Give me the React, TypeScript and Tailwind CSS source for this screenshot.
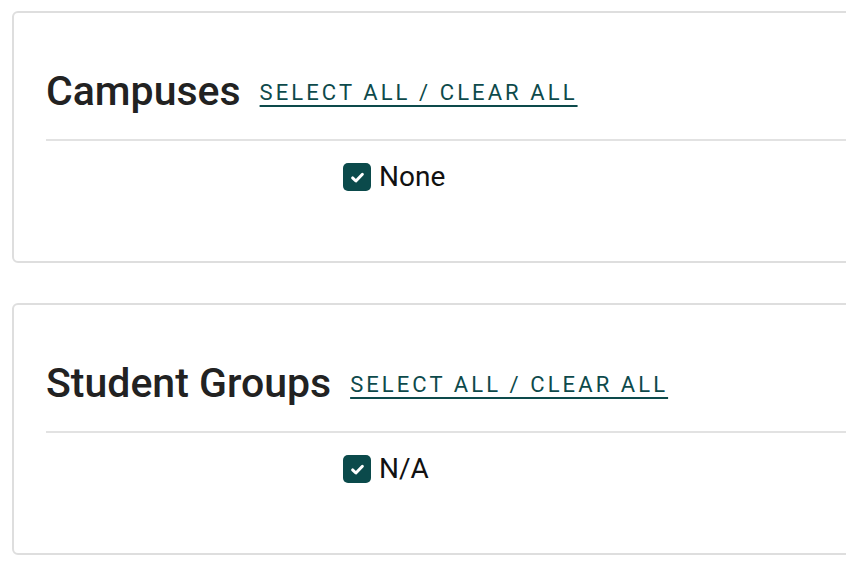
import React from 'react';

const CheckIcon = () => (
  <svg viewBox="0 0 16 16" className="size-[17px]" fill="none">
    <path d="M3.4 8.4 6.5 11.3 12.6 5" stroke="white" strokeWidth="2.8" strokeLinecap="round" strokeLinejoin="round" />
  </svg>
);

const FilterCard = ({ title, option }: { title: string; option: string }) => (
  <section className="w-[900px] rounded-md border-2 border-[#dedede] bg-white pt-[55px] pb-[70px] pl-8">
    <div className="flex h-12 items-center gap-[19px]">
      <h2 className="text-[41px] leading-[1.2] font-medium text-[#222222]">{title}</h2>
      <button
        type="button"
        className="mt-[2px] text-[22px] leading-none tracking-[0.14em] text-[#0d4a4b] underline decoration-2 underline-offset-[5px]"
      >
        SELECT ALL / CLEAR ALL
      </button>
    </div>
    <div className="mt-[23px] h-[2px] bg-[#e2e2e2]" />
    <label className="mt-[22px] ml-[297px] flex h-7 items-center gap-[8px]">
      <span className="flex size-[28px] items-center justify-center rounded-[5px] bg-[#0b4a4b]">
        <CheckIcon />
      </span>
      <span className="text-[28px] leading-none text-[#111111]">{option}</span>
    </label>
  </section>
);

export default function App() {
  return (
    <div className="min-h-screen bg-white pt-[11px] pl-3 font-['Roboto',_'Liberation_Sans',_sans-serif]">
      <div className="flex flex-col gap-[40px]">
        <FilterCard title="Campuses" option="None" />
        <FilterCard title="Student Groups" option="N/A" />
      </div>
    </div>
  );
}
